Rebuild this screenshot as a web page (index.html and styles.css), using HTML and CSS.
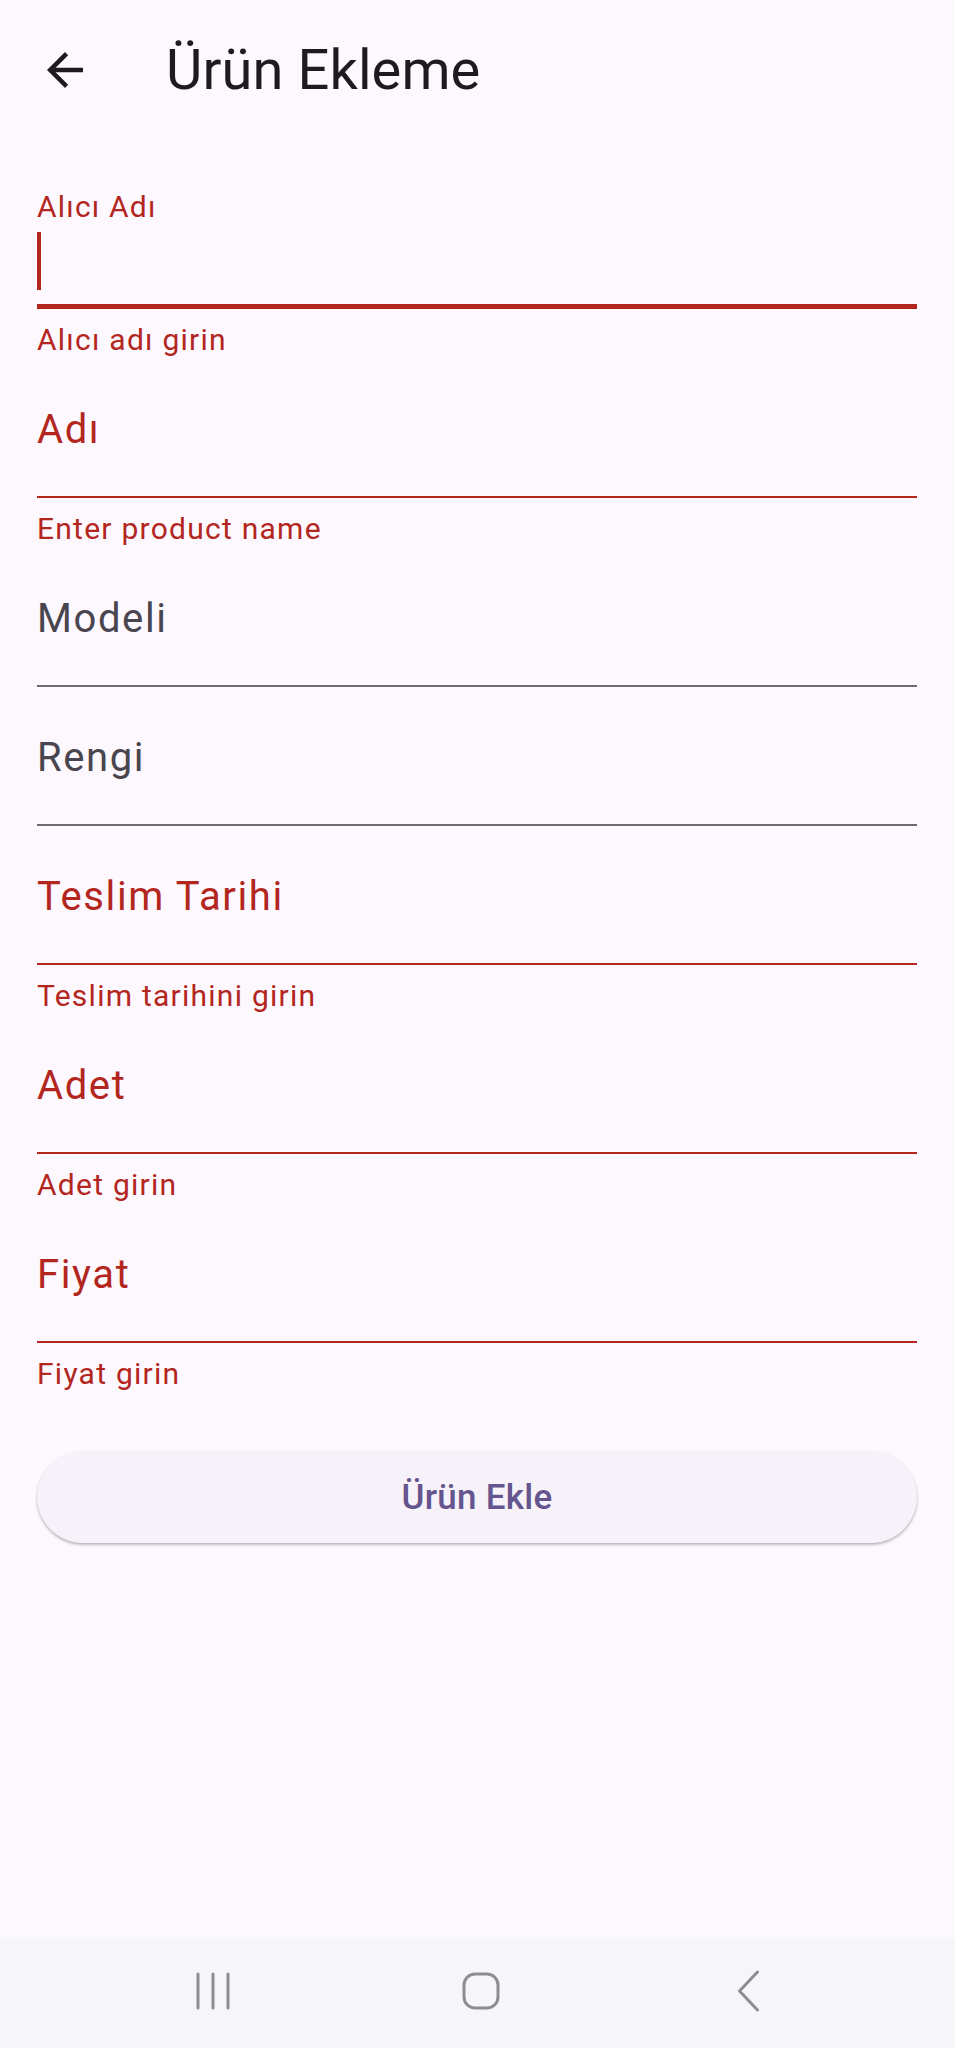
FILE: index.html
```html
<!DOCTYPE html>
<html lang="tr">
<head>
<meta charset="utf-8">
<title>Ürün Ekleme</title>
<link rel="stylesheet" href="styles.css">
</head>
<body>
<div class="screen">
  <header class="appbar">
    <svg class="back" viewBox="0 0 24 24" width="54" height="54" aria-hidden="true">
      <path d="M20 11H7.83l5.59-5.59L12 4l-8 8 8 8 1.41-1.41L7.83 13H20v-2z" fill="#1d1b20"/>
    </svg>
    <h1 class="title">Ürün Ekleme</h1>
  </header>

  <main class="form">
    <div class="field focused">
      <div class="float-label">Alıcı Adı</div>
      <div class="input-line"><span class="cursor"></span></div>
    </div>
    <div class="helper">Alıcı adı girin</div>

    <div class="field error"><span class="label">Adı</span></div>
    <div class="helper">Enter product name</div>

    <div class="field"><span class="label">Modeli</span></div>

    <div class="field"><span class="label">Rengi</span></div>

    <div class="field error"><span class="label">Teslim Tarihi</span></div>
    <div class="helper">Teslim tarihini girin</div>

    <div class="field error"><span class="label">Adet</span></div>
    <div class="helper">Adet girin</div>

    <div class="field error"><span class="label">Fiyat</span></div>
    <div class="helper">Fiyat girin</div>

    <button class="submit" type="button">Ürün Ekle</button>
  </main>

  <nav class="sysnav">
    <div class="slot">
      <svg width="36" height="38" viewBox="0 0 36 38" aria-hidden="true">
        <g stroke="#8d8d8f" stroke-width="3" stroke-linecap="round">
          <line x1="3" y1="2" x2="3" y2="36"/>
          <line x1="18" y1="2" x2="18" y2="36"/>
          <line x1="33" y1="2" x2="33" y2="36"/>
        </g>
      </svg>
    </div>
    <div class="slot">
      <svg width="38" height="38" viewBox="0 0 38 38" aria-hidden="true">
        <rect x="2" y="2" width="34" height="34" rx="11" fill="none" stroke="#8d8d8f" stroke-width="3"/>
      </svg>
    </div>
    <div class="slot">
      <svg width="24" height="42" viewBox="0 0 24 42" aria-hidden="true">
        <polyline points="20.5,2 2.5,21 20.5,40" fill="none" stroke="#8d8d8f" stroke-width="3" stroke-linecap="round" stroke-linejoin="round"/>
      </svg>
    </div>
  </nav>
</div>
</body>
</html>
```

FILE: styles.css
```css
* { box-sizing: border-box; }

html, body {
  margin: 0;
  padding: 0;
  background: #fdf7fe;
}

body {
  font-family: Roboto, "Noto Sans", "Liberation Sans", sans-serif;
  color: #1d1b20;
}

.screen {
  width: 955px;
  height: 2048px;
  display: flex;
  flex-direction: column;
  background: #fdf7fe;
}

/* App bar */
.appbar {
  height: 139px;
  flex: none;
  display: flex;
  align-items: center;
}

.back {
  margin-left: 38px;
  flex: none;
  display: block;
}

.title {
  margin: 0 0 0 74px;
  font-size: 56px;
  font-weight: 400;
  line-height: 64px;
  color: #1d1b20;
  letter-spacing: 0.1px;
}

/* Form */
.form {
  flex: 1;
  padding: 28px 38px 0 37px;
  display: flex;
  flex-direction: column;
}

.field {
  height: 139px;
  padding-top: 41px;
  border-bottom: 2px solid #6f6a74;
  font-size: 40px;
  line-height: 60px;
  letter-spacing: 1.6px;
  color: #49454f;
  flex: none;
}

.field.error {
  color: #b3261e;
  border-bottom-color: #b3261e;
}

.field.focused {
  height: auto;
  padding-top: 20px;
  padding-bottom: 13px;
  border-bottom: 5px solid #b3261e;
}

.float-label {
  font-size: 30px;
  line-height: 40px;
  letter-spacing: 1.2px;
  color: #b3261e;
}

.input-line {
  margin-top: 4px;
  height: 60px;
  display: flex;
  align-items: center;
}

.cursor {
  display: block;
  width: 4px;
  height: 58px;
  background: #b3261e;
}

.helper {
  padding-top: 11px;
  height: 50px;
  font-size: 30px;
  line-height: 39px;
  letter-spacing: 1.25px;
  color: #b3261e;
  flex: none;
}

.submit {
  margin-top: 58px;
  height: 92px;
  width: 100%;
  border: none;
  border-radius: 46px;
  background: #f7f1f9;
  color: #65558f;
  font-family: Roboto, "Noto Sans", "Liberation Sans", sans-serif;
  font-size: 35px;
  font-weight: 500;
  letter-spacing: 0.25px;
  box-shadow: 0 2px 3px rgba(0, 0, 0, 0.22), 0 1px 2px rgba(0, 0, 0, 0.08);
  flex: none;
}

/* System navigation bar */
.sysnav {
  height: 109px;
  flex: none;
  background: #f6f6f8;
  display: grid;
  grid-template-columns: repeat(3, 268px);
  padding: 0 0 5px 79px;
  align-items: center;
}

.slot {
  display: flex;
  justify-content: center;
  align-items: center;
}

.slot svg { display: block; }
```
